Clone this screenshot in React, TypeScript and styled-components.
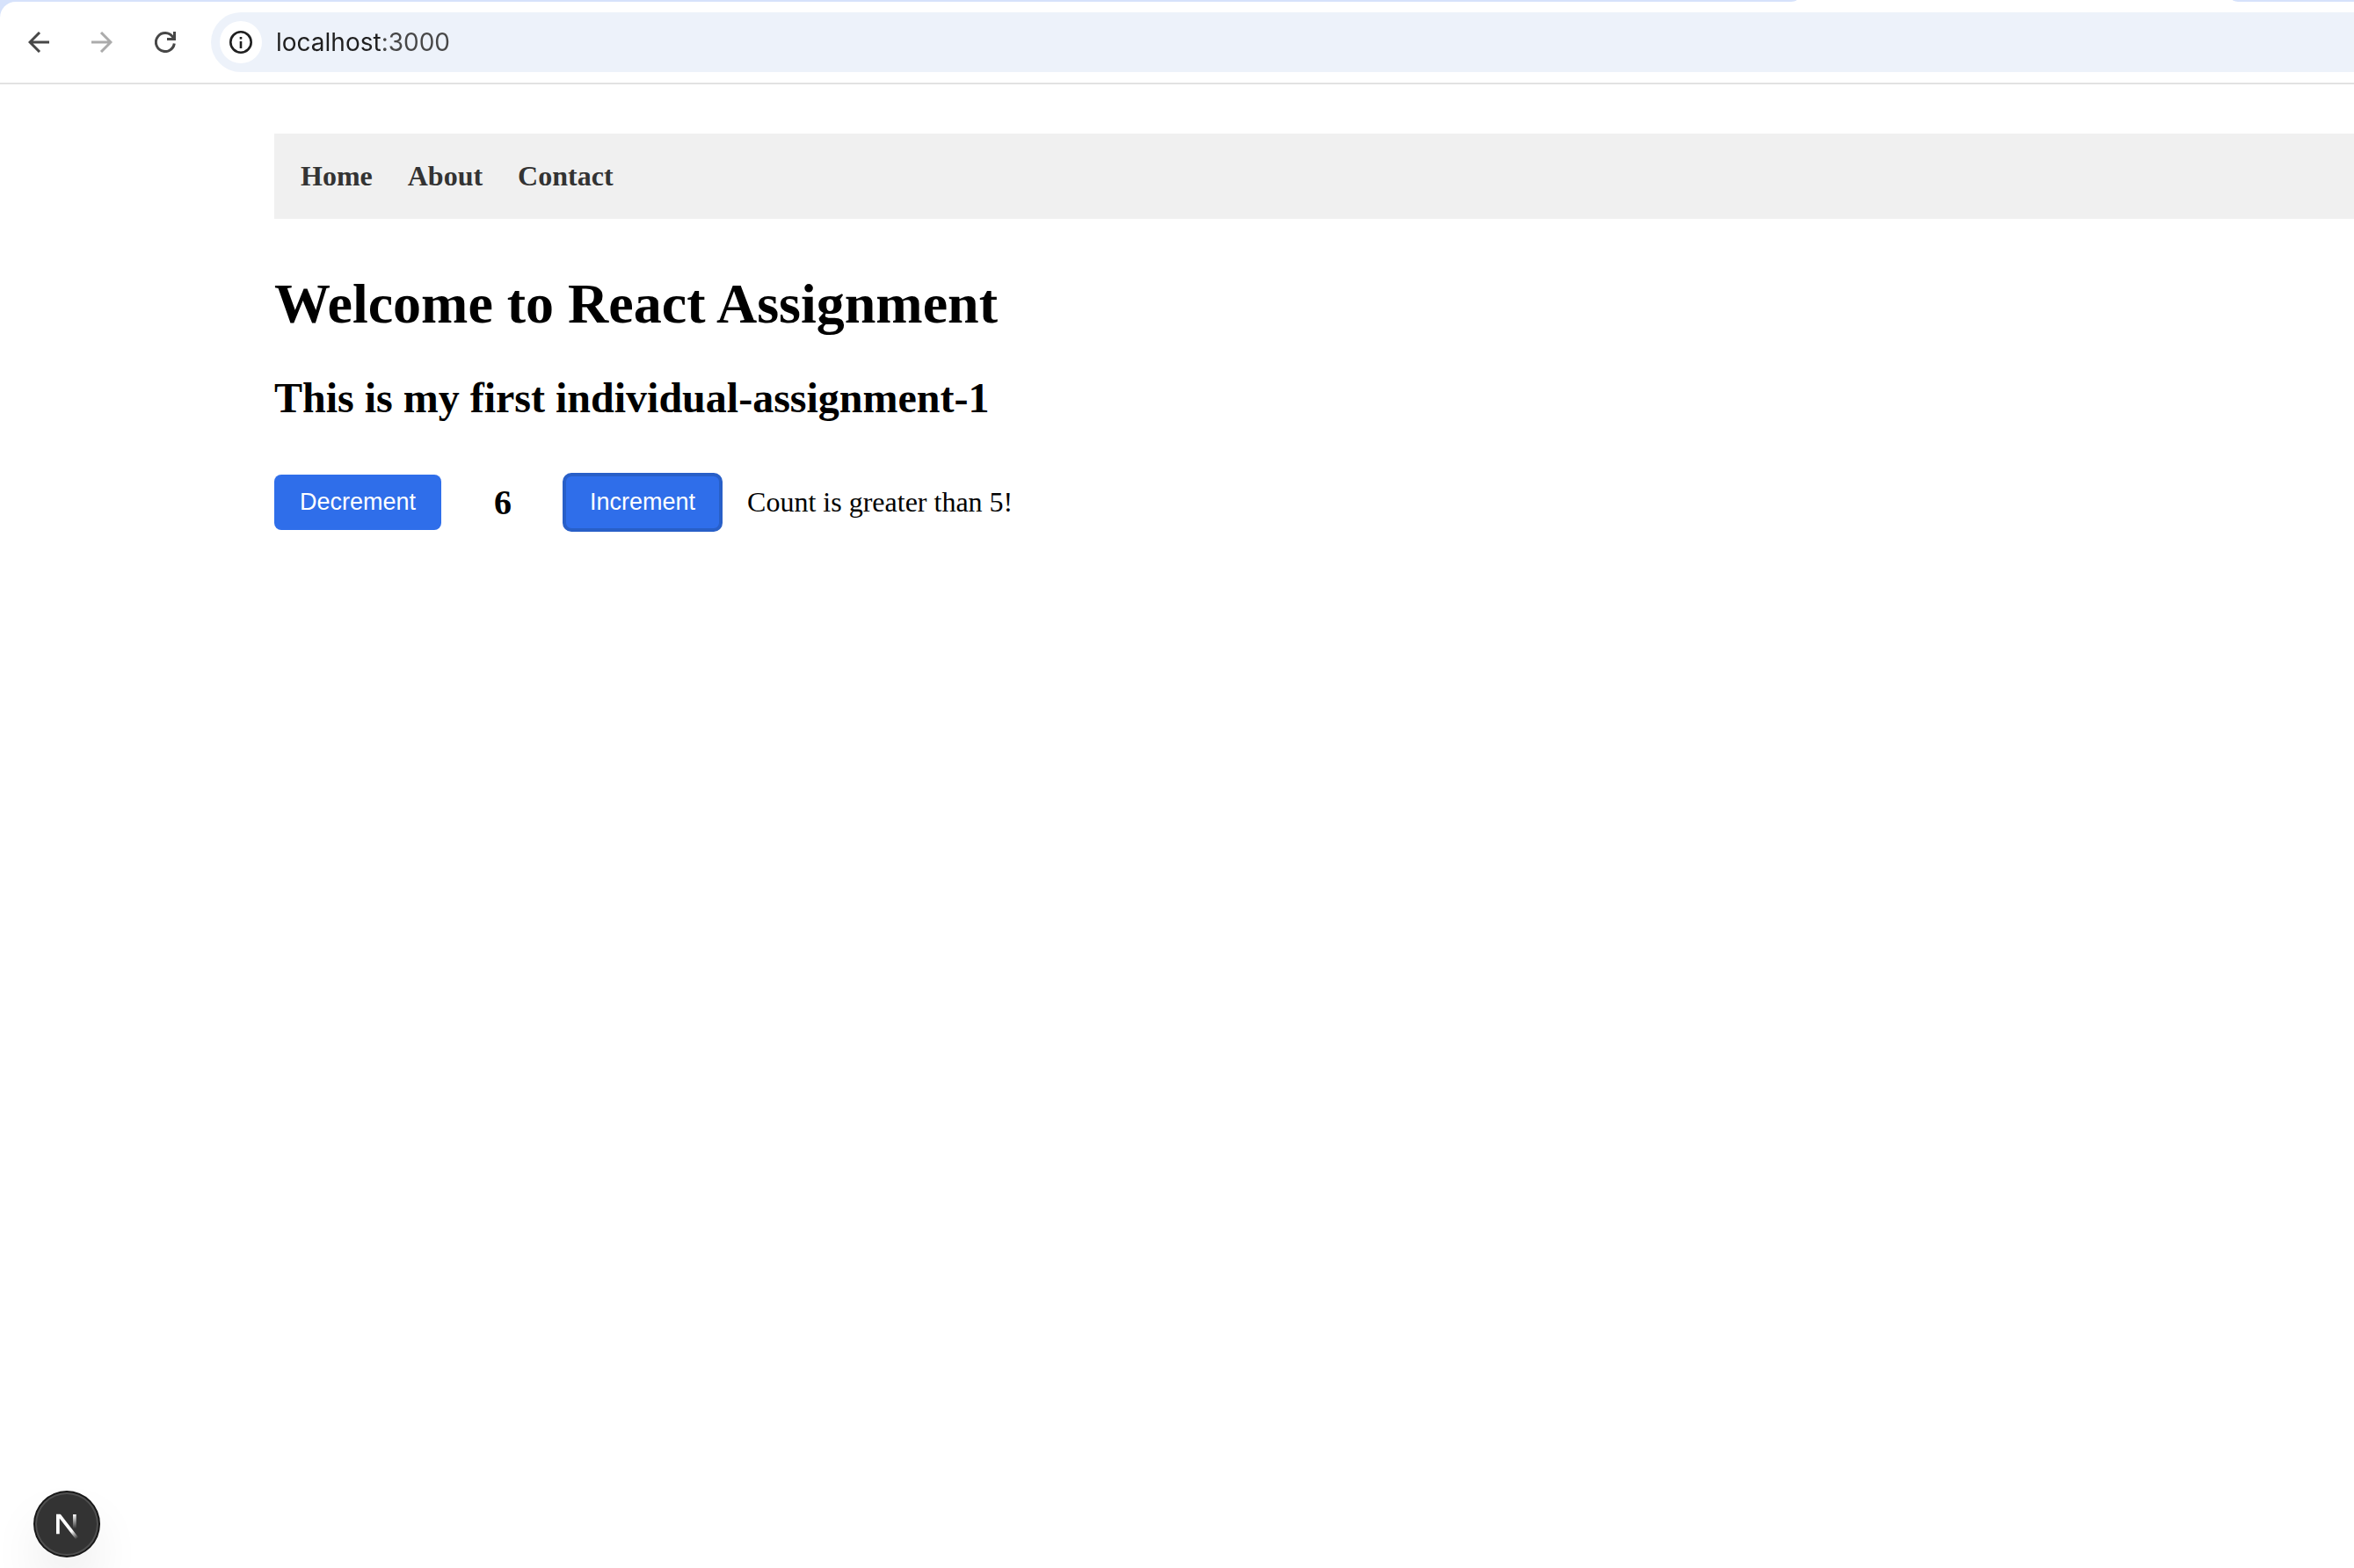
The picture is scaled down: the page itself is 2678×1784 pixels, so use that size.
import React, { useState } from "react";
import styled, { createGlobalStyle } from "styled-components";

const serif = `"Liberation Serif", "Times New Roman", Times, serif`;
const sans = `"Liberation Sans", Arial, sans-serif`;

const GlobalStyle = createGlobalStyle`
  *, *::before, *::after { box-sizing: border-box; }
  body {
    margin: 0;
    background: #fff;
    color: #000;
    font-family: ${serif};
    font-size: 32px;
    line-height: 37px;
    text-rendering: optimizeLegibility;
    font-variant-ligatures: common-ligatures discretionary-ligatures;
  }
`;

const Window = styled.div`
  display: flex;
  flex-direction: column;
  min-height: 100vh;
`;

const Chrome = styled.header`
  background: #d6e2fb;
`;

const TabStrip = styled.div`
  display: flex;
  height: 2px;
  background: #fff;
`;

const InactiveTabs = styled.div<{ $side: "left" | "right" }>`
  background: #d6e2fb;
  flex: ${(p) => (p.$side === "left" ? "1" : "0 0 138px")};
  border-radius: ${(p) => (p.$side === "left" ? "0 0 10px 0 / 0 0 2px 0" : "0 0 0 10px / 0 0 0 2px")};
`;

const ActiveTab = styled.div`
  flex: 0 0 496px;
`;

const Toolbar = styled.div`
  display: flex;
  align-items: center;
  padding: 12px 0 12px 26px;
  background: #fff;
  border-bottom: 2px solid #e2e2e2;
  border-top-left-radius: 18px;
`;

const ToolButtons = styled.div`
  display: flex;
  gap: 36px;
  margin-right: 34px;
`;

const ToolButton = styled.button`
  display: flex;
  align-items: center;
  justify-content: center;
  width: 36px;
  height: 36px;
  padding: 0;
  border: 0;
  background: none;
  color: #474747;

  &:disabled {
    color: #ababab;
  }
`;

const Omnibox = styled.div`
  display: flex;
  flex: 1;
  align-items: center;
  gap: 16px;
  height: 68px;
  padding-left: 10px;
  background: #edf2fa;
  border-radius: 34px 0 0 34px;
`;

const SiteInfo = styled(ToolButton)`
  width: 48px;
  height: 48px;
  border-radius: 50%;
  background: #fff;
  color: #1f1f1f;
`;

/* The host is darker than the port, so the text is filled by a two-step gradient. */
const Address = styled.input`
  flex: 1;
  min-width: 0;
  height: 40px;
  padding: 0;
  border: 0;
  outline: 0;
  color: #1f1f1f;
  font: 28px/36px Inter, sans-serif;
  background: linear-gradient(to right, #1f1f1f 121px, #474747 121px);
  background-clip: text;
  -webkit-text-fill-color: transparent;
`;

const Page = styled.main`
  padding: 56px 0 0 312px;
`;

const Nav = styled.nav`
  display: flex;
  gap: 40px;
  padding: 30px;
  background: #f0f0f0;
`;

const NavLink = styled.a`
  color: #333;
  font-weight: bold;
  text-decoration: none;
`;

const Title = styled.h1`
  margin: 60px 0 42px;
  font-size: 64px;
  line-height: 74px;
`;

const Subtitle = styled.h2`
  margin: 0 0 59px;
  font-size: 48px;
  line-height: 56px;
`;

const Counter = styled.div`
  display: flex;
  align-items: center;
`;

const CountButton = styled.button<{ $active?: boolean }>`
  padding: 16px 29px;
  border: 0;
  border-radius: 8px;
  background: #2f6eea;
  color: #fff;
  font: 27px/31px ${sans};
  outline: ${(p) => (p.$active ? "4px solid #285fc8" : "none")};
  outline-offset: -2px;
`;

const Count = styled.output`
  margin: 0 60px;
  font-size: 40px;
  line-height: 44px;
  font-weight: bold;
`;

const Message = styled.p`
  margin: 0 0 0 30px;
`;

const DevBadge = styled.button`
  position: fixed;
  left: 40px;
  bottom: 14px;
  width: 72px;
  height: 72px;
  padding: 0;
  display: flex;
  align-items: center;
  justify-content: center;
  border: 0;
  border-radius: 50%;
  background: #333;
  box-shadow:
    0 0 0 2px #171717,
    inset 0 0 0 2px rgba(255, 255, 255, 0.14),
    0 32px 64px -16px rgba(0, 0, 0, 0.24);

  svg {
    flex: none;
  }
`;

const BackIcon = () => (
  <svg width="24" height="24" viewBox="0 0 24 24" fill="none" stroke="currentColor" strokeWidth="3" aria-hidden="true">
    <path d="M24 12H2M13 1L2 12l11 11" />
  </svg>
);

const ForwardIcon = () => (
  <svg width="24" height="24" viewBox="0 0 24 24" fill="none" stroke="currentColor" strokeWidth="3" aria-hidden="true">
    <path d="M0 12h22M11 1l11 11-11 11" />
  </svg>
);

const ReloadIcon = () => (
  <svg width="24" height="24" viewBox="0 0 24 24" fill="none" stroke="currentColor" strokeWidth="3" aria-hidden="true">
    <path d="M22.3 13.5A10.5 10.5 0 1 1 20.5 6L22 8.500" />
    <path d="M22.500 0v8.500H14" />
  </svg>
);

const InfoIcon = () => (
  <svg width="26" height="26" viewBox="0 0 26 26" fill="none" stroke="currentColor" strokeWidth="2.6" aria-hidden="true">
    <circle cx="13" cy="13" r="11.7" />
    <path d="M13 12v8" />
    <path d="M13 7v2.600" />
  </svg>
);

const NextIcon = () => (
  <svg width="80" height="80" viewBox="0 0 40 40" fill="none" strokeWidth="1.86" aria-hidden="true">
    <defs>
      <linearGradient id="diagonal" x1="9.96" y1="11.12" x2="15.48" y2="17.97" gradientUnits="userSpaceOnUse">
        <stop stopColor="#fff" />
        <stop offset="0.604" stopColor="#fff" stopOpacity="0" />
        <stop offset="1" stopColor="#fff" stopOpacity="0" />
      </linearGradient>
      <linearGradient id="stem" x1="11.82" y1="1.4" x2="11.79" y2="9.63" gradientUnits="userSpaceOnUse">
        <stop stopColor="#fff" />
        <stop offset="1" stopColor="#fff" stopOpacity="0" />
      </linearGradient>
      <clipPath id="letter">
        <rect x="0" y="1.4" width="16" height="15" />
      </clipPath>
    </defs>
    <g transform="translate(12.6 13)" clipPath="url(#letter)">
      <path d="M13.3 15.2L2.34 1V12.6" stroke="url(#diagonal)" />
      <path d="M11.825 1.500V13.1" stroke="url(#stem)" />
    </g>
  </svg>
);

export default function App() {
  const [count, setCount] = useState(6);
  const [url, setUrl] = useState("localhost:3000");

  return (
    <Window>
      <GlobalStyle />
      <Chrome>
        <TabStrip>
          <InactiveTabs $side="left" />
          <ActiveTab />
          <InactiveTabs $side="right" />
        </TabStrip>
        <Toolbar>
          <ToolButtons>
            <ToolButton aria-label="Back"><BackIcon /></ToolButton>
            <ToolButton aria-label="Forward" disabled><ForwardIcon /></ToolButton>
            <ToolButton aria-label="Reload"><ReloadIcon /></ToolButton>
          </ToolButtons>
          <Omnibox>
            <SiteInfo aria-label="Site information"><InfoIcon /></SiteInfo>
            <Address aria-label="Address" value={url} onChange={(e) => setUrl(e.target.value)} />
          </Omnibox>
        </Toolbar>
      </Chrome>
      <Page>
        <Nav>
          <NavLink href="#home">Home</NavLink>
          <NavLink href="#about">About</NavLink>
          <NavLink href="#contact">Contact</NavLink>
        </Nav>
        <Title>Welcome to React Assignment</Title>
        <Subtitle>This is my first individual-assignment-1</Subtitle>
        <Counter>
          <CountButton onClick={() => setCount(count - 1)}>Decrement</CountButton>
          <Count>{count}</Count>
          <CountButton $active onClick={() => setCount(count + 1)}>Increment</CountButton>
          {count > 5 && <Message>Count is greater than 5!</Message>}
        </Counter>
      </Page>
      <DevBadge aria-label="Open developer tools"><NextIcon /></DevBadge>
    </Window>
  );
}
